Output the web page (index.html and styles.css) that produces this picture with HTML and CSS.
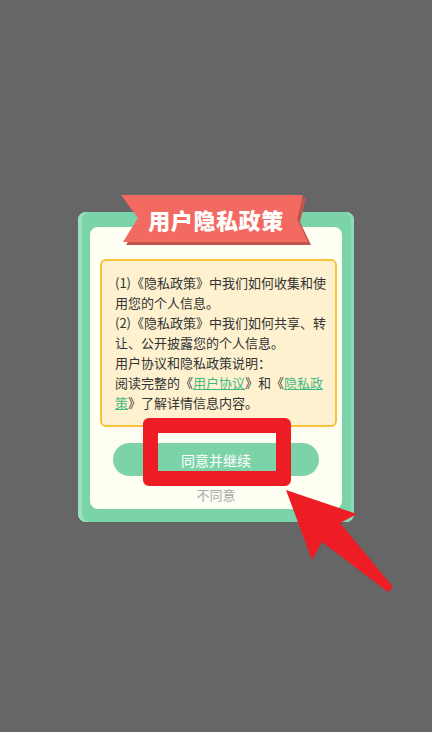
FILE: index.html
```html
<!DOCTYPE html>
<html lang="zh-CN">
<head>
<meta charset="utf-8">
<title>用户隐私政策</title>
<link rel="stylesheet" href="styles.css">
</head>
<body>
  <div class="card">
    <div class="ribbon">
      <svg class="ribbon-bg" width="193" height="51" viewBox="0 0 193 51">
        <polygon points="3,3 185,3 179,27 190,50 5,50 20,26" fill="#bf564d"/>
        <polygon points="0,0 182,0 176,24 187,47 2,47 17,23" fill="#f26a61"/>
      </svg>
      <span class="ribbon-title">用户隐私政策</span>
    </div>
    <div class="inner">
      <div class="notice">
        <p>(1)《隐私政策》中我们如何收集和使用您的个人信息。</p>
        <p>(2)《隐私政策》中我们如何共享、转让、公开披露您的个人信息。</p>
        <p>用户协议和隐私政策说明：</p>
        <p>阅读完整的《<a class="link">用户协议</a>》和《<a class="link">隐私政策</a>》了解详情信息内容。</p>
      </div>
      <div class="agree">同意并继续</div>
      <div class="disagree">不同意</div>
    </div>
  </div>
  <div class="highlight"></div>
  <svg class="arrow" width="120" height="112" viewBox="0 0 120 112">
    <polygon points="6,5 77,29 60,38 113,102 108,107 42,57 32,75" fill="#ee1c25"/>
  </svg>
</body>
</html>
```
FILE: styles.css
```css
* { box-sizing: border-box; }
html, body { margin: 0; padding: 0; }
body {
  position: relative;
  width: 432px;
  height: 732px;
  background: #666666;
  display: flex;
  align-items: center;
  justify-content: center;
  font-family: "Noto Sans CJK SC", "Noto Sans", sans-serif;
}
.card {
  position: relative;
  width: 276px;
  height: 310px;
  margin-top: 2px;
  padding: 15px 12px 13px 12px;
  background: #7ad3a9;
  border-radius: 8px;
  box-shadow: inset 4px 0 0 #9be0bf, inset -3px 0 0 #8fdbb6;
}
.ribbon {
  position: absolute;
  left: 43px;
  top: -17px;
  width: 193px;
  height: 47px;
  display: flex;
  align-items: center;
  justify-content: center;
}
.ribbon-bg {
  position: absolute;
  left: 0;
  top: 0;
}
.ribbon-title {
  position: relative;
  color: #ffffff;
  font-size: 22px;
  font-weight: 900;
  letter-spacing: 0.6px;
  line-height: 1;
  margin-left: -3px;
}
.inner {
  height: 100%;
  background: #fefef3;
  border-radius: 8px;
  padding: 32px 5px 5px 10px;
  display: flex;
  flex-direction: column;
}
.notice {
  border: 2px solid #f8c23a;
  background: #fdf1cf;
  border-radius: 6px;
  padding: 12px 3px 12px 13px;
  font-size: 13px;
  line-height: 20px;
  color: #333333;
}
.notice p { margin: 0; }
.link {
  color: #45b785;
  text-decoration: underline;
}
.agree {
  margin: 16px 0 0 13px;
  width: 206px;
  height: 33px;
  border-radius: 17px;
  background: #7dd3a8;
  color: #ffffff;
  font-size: 14px;
  display: flex;
  align-items: center;
  justify-content: center;
}
.disagree {
  margin: 10px 0 0 13px;
  width: 206px;
  text-align: center;
  font-size: 13px;
  line-height: 18px;
  color: #a8a8a8;
}
.highlight {
  position: absolute;
  left: 143px;
  top: 418px;
  width: 148px;
  height: 68px;
  border: 15px solid #ee1c25;
  border-radius: 6px;
}
.arrow {
  position: absolute;
  left: 280px;
  top: 485px;
}
```
